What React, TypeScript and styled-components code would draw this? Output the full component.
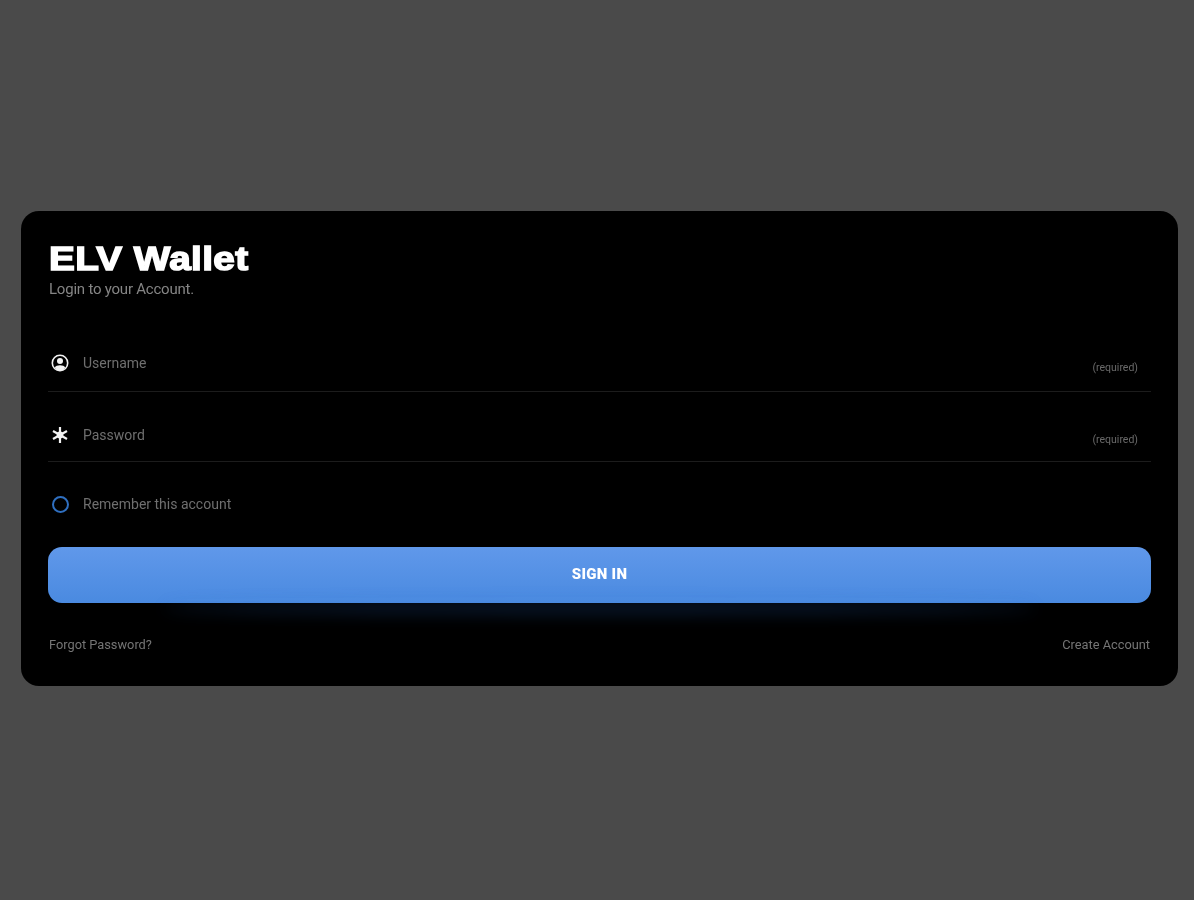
import styled, { createGlobalStyle } from "styled-components";

const GlobalStyle = createGlobalStyle`
  html, body {
    margin: 0;
    padding: 0;
    background: #4a4a4a;
  }
  * {
    box-sizing: border-box;
  }
`;

const Page = styled.div`
  width: 100%;
  height: 900px;
  padding: 211px 16px 0 21px;
  font-family: Roboto, "Liberation Sans", sans-serif;
  filter: blur(0.7px);
`;

const Card = styled.form`
  height: 475px;
  background: #000;
  border-radius: 18px;
  padding: 28px 27px 0 27px;
`;

const Title = styled.h1`
  width: fit-content;
  margin: 0 0 0 1px;
  font-family: "Liberation Sans", Arial, sans-serif;
  font-size: 34px;
  line-height: 39px;
  font-weight: 700;
  color: #fff;
  -webkit-text-stroke: 1.5px #fff;
  letter-spacing: 0.3px;
  transform: scaleX(1.14);
  transform-origin: left center;
`;

const Subtitle = styled.p`
  margin: 2px 0 0 1px;
  font-size: 15px;
  line-height: 18px;
  color: #858585;
  letter-spacing: -0.22px;
`;

const Fields = styled.div`
  display: flex;
  flex-direction: column;
  margin-top: 54px;
`;

const Field = styled.label<{ $height: number }>`
  display: flex;
  align-items: flex-start;
  height: ${(p) => p.$height}px;
  border-bottom: 1px solid #1c1c1c;
  margin-bottom: 32px;
  padding-top: 1px;
`;

const IconSlot = styled.span`
  display: flex;
  justify-content: center;
  width: 24px;
  margin-right: 11px;
  padding-top: 1px;
  color: #f2f2f2;
`;

const FieldText = styled.span`
  flex: 1;
  font-size: 14px;
  line-height: 20px;
  color: #6f6f6f;
`;

const Required = styled.span`
  margin: 8px 13px 0 0;
  font-size: 10.5px;
  line-height: 14px;
  color: #6a6a6a;
`;

const RememberRow = styled.div`
  display: flex;
  align-items: center;
  height: 20px;
`;

const Radio = styled.span`
  width: 17px;
  height: 17px;
  margin: 0 14px 0 4px;
  border: 2px solid #2f6fc0;
  border-radius: 50%;
`;

const RememberText = styled.span`
  font-size: 14px;
  line-height: 20px;
  color: #6f6f6f;
`;

const SignIn = styled.button`
  position: relative;
  display: block;
  width: 100%;
  height: 56px;
  margin-top: 33px;
  padding: 0 0 2px;
  border: 0;
  border-radius: 14px;
  background: linear-gradient(#6098ea, #4a8ae0);
  color: #fff;
  font-family: Roboto, "Liberation Sans", sans-serif;
  font-size: 15px;
  font-weight: 900;
  letter-spacing: 0.3px;

  &::after {
    content: "";
    position: absolute;
    left: 116px;
    right: 116px;
    bottom: 0;
    height: 6px;
    border-radius: 50%;
    box-shadow: 0 8px 16px 2px rgba(42, 110, 210, 0.28);
  }
`;

const Footer = styled.div`
  display: flex;
  justify-content: space-between;
  margin: 33px 1px 0 1px;
`;

const FooterLink = styled.a`
  font-size: 12.8px;
  line-height: 18px;
  color: #757575;
`;

function UserIcon() {
  return (
    <svg width="18" height="18" viewBox="0 0 18 18" style={{ display: "block" }}>
      <circle cx="9" cy="9" r="7.7" fill="#000" stroke="currentColor" strokeWidth="1.6" />
      <circle cx="9" cy="7" r="3" fill="currentColor" />
      <path d="M3.8 13.4 C5 10.6 13 10.6 14.2 13.4 L12 16 H6 Z" fill="currentColor" />
    </svg>
  );
}

function AsteriskIcon() {
  return (
    <svg width="18" height="18" viewBox="0 0 18 18" style={{ display: "block" }}>
      <circle cx="9" cy="9" r="3.4" fill="currentColor" />
      <path
        d="M9 1 V17 M2 5 L16 13 M16 5 L2 13"
        stroke="currentColor"
        strokeWidth="2.2"
        fill="none"
      />
    </svg>
  );
}

export default function App() {
  return (
    <>
      <GlobalStyle />
      <Page>
        <Card>
          <Title>ELV Wallet</Title>
          <Subtitle>Login to your Account.</Subtitle>
          <Fields>
            <Field $height={40}>
              <IconSlot>
                <UserIcon />
              </IconSlot>
              <FieldText>Username</FieldText>
              <Required>(required)</Required>
            </Field>
            <Field $height={38}>
              <IconSlot>
                <AsteriskIcon />
              </IconSlot>
              <FieldText>Password</FieldText>
              <Required>(required)</Required>
            </Field>
          </Fields>
          <RememberRow>
            <Radio />
            <RememberText>Remember this account</RememberText>
          </RememberRow>
          <SignIn type="button">SIGN IN</SignIn>
          <Footer>
            <FooterLink>Forgot Password?</FooterLink>
            <FooterLink>Create Account</FooterLink>
          </Footer>
        </Card>
      </Page>
    </>
  );
}
